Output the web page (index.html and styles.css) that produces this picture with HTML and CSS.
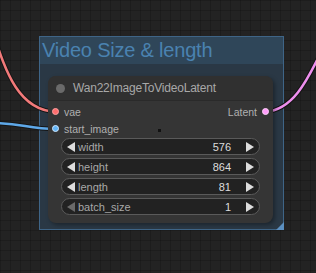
FILE: index.html
```html
<!DOCTYPE html>
<html lang="en">
<head>
  <meta charset="UTF-8">
  <title>Video Size &amp; length</title>
  <link rel="stylesheet" href="styles.css">
</head>
<body>
  <div class="canvas">
    <div class="group">
      <div class="group-title">Video Size &amp; length</div>
      <div class="group-resize"></div>
    </div>

    <svg class="links" width="316" height="273" viewBox="0 0 316 273">
      <g fill="none" stroke-linecap="round">
        <path class="link-shadow" d="M -8 30 C 6 72, 18 110, 56 112"/>
        <path d="M -8 30 C 6 72, 18 110, 56 112" stroke="#f27a7a"/>
        <path class="link-shadow" d="M -6 123 C 22 123, 28 129, 56 129"/>
        <path d="M -6 123 C 22 123, 28 129, 56 129" stroke="#5ea8e8"/>
        <path class="link-shadow" d="M 265 112 C 292 110, 306 84, 324 46"/>
        <path d="M 265 112 C 292 110, 306 84, 324 46" stroke="#ee8fee"/>
      </g>
    </svg>

    <div class="node">
      <div class="node-header">
        <span class="node-dot"></span>
        <span class="node-title">Wan22ImageToVideoLatent</span>
      </div>
      <div class="slots">
        <div class="slot-row">
          <div class="slot in"><span class="pin pin-vae"></span>vae</div>
          <div class="slot out">Latent<span class="pin pin-latent"></span></div>
        </div>
        <div class="slot-row">
          <div class="slot in"><span class="pin pin-image"></span>start_image</div>
        </div>
      </div>
      <div class="widgets">
        <div class="widget">
          <svg class="arrow" width="8" height="10" viewBox="0 0 8 10"><path d="M8 0 L0 5 L8 10 Z"/></svg>
          <span class="w-label">width</span>
          <span class="w-value">576</span>
          <svg class="arrow" width="8" height="10" viewBox="0 0 8 10"><path d="M0 0 L8 5 L0 10 Z"/></svg>
        </div>
        <div class="widget">
          <svg class="arrow" width="8" height="10" viewBox="0 0 8 10"><path d="M8 0 L0 5 L8 10 Z"/></svg>
          <span class="w-label">height</span>
          <span class="w-value">864</span>
          <svg class="arrow" width="8" height="10" viewBox="0 0 8 10"><path d="M0 0 L8 5 L0 10 Z"/></svg>
        </div>
        <div class="widget">
          <svg class="arrow" width="8" height="10" viewBox="0 0 8 10"><path d="M8 0 L0 5 L8 10 Z"/></svg>
          <span class="w-label">length</span>
          <span class="w-value">81</span>
          <svg class="arrow" width="8" height="10" viewBox="0 0 8 10"><path d="M0 0 L8 5 L0 10 Z"/></svg>
        </div>
        <div class="widget">
          <svg class="arrow arrow-off" width="8" height="10" viewBox="0 0 8 10"><path d="M8 0 L0 5 L8 10 Z"/></svg>
          <span class="w-label">batch_size</span>
          <span class="w-value">1</span>
          <svg class="arrow" width="8" height="10" viewBox="0 0 8 10"><path d="M0 0 L8 5 L0 10 Z"/></svg>
        </div>
      </div>
      <span class="cursor-dot"></span>
    </div>
  </div>
</body>
</html>
```

FILE: styles.css
```css
body {
  margin: 0;
  font-family: "Liberation Sans", Arial, sans-serif;
  background: #222;
}

.canvas {
  position: relative;
  width: 316px;
  height: 273px;
  overflow: hidden;
  background-color: #232323;
  background-image:
    linear-gradient(to right, rgba(0,0,0,0.18) 1px, transparent 1px),
    linear-gradient(to bottom, rgba(0,0,0,0.18) 1px, transparent 1px);
  background-size: 10px 10px;
}

.group {
  position: absolute;
  left: 39px;
  top: 36px;
  width: 243px;
  height: 192px;
  border: 1px solid #3f6587;
  background: #2a3845;
  z-index: 1;
}

.group-title {
  height: 27px;
  background: #2f4659;
  color: #4a82b0;
  font-size: 20px;
  line-height: 26px;
  padding-left: 2px;
  letter-spacing: -0.2px;
}

.group-resize {
  position: absolute;
  right: -1px;
  bottom: -1px;
  width: 0;
  height: 0;
  border-left: 8px solid transparent;
  border-bottom: 8px solid #5b8fc0;
}

.links {
  position: absolute;
  left: 0;
  top: 0;
  z-index: 2;
}

.links path {
  stroke-width: 2.5;
}

.links .link-shadow {
  stroke: #151515;
  stroke-width: 4.5;
}

.node {
  position: absolute;
  left: 48px;
  top: 76px;
  width: 225px;
  height: 147px;
  background: #353535;
  border-radius: 8px;
  box-shadow: 2px 2px 4px rgba(0,0,0,0.35);
  z-index: 3;
  display: flex;
  flex-direction: column;
}

.node-header {
  height: 24px;
  background: #303030;
  border-radius: 8px 8px 0 0;
  display: flex;
  align-items: center;
  border-bottom: 1px solid #2a2a2a;
}

.node-dot {
  width: 9px;
  height: 9px;
  border-radius: 50%;
  background: #6a6a6a;
  margin-left: 8px;
  margin-right: 8px;
}

.node-title {
  color: #a8a8a8;
  font-size: 12px;
  letter-spacing: -0.2px;
}

.slots {
  padding-top: 2px;
}

.slot-row {
  height: 17px;
  display: flex;
  align-items: center;
  justify-content: space-between;
}

.slot {
  display: flex;
  align-items: center;
  color: #b0b0b0;
  font-size: 10.5px;
}

.slot.in .pin {
  margin-left: 4px;
  margin-right: 5px;
}

.slot.out .pin {
  margin-left: 5px;
  margin-right: 4px;
}

.pin {
  width: 7px;
  height: 7px;
  border-radius: 50%;
  box-sizing: border-box;
}

.pin-vae {
  background: #ff6e6e;
  border: 1px solid #ffa0a0;
}

.pin-image {
  background: #64b5f6;
  border: 1px solid #cfe8ff;
}

.pin-latent {
  background: #ff9cf9;
  border: 1px solid #ffd0fc;
}

.widgets {
  display: flex;
  flex-direction: column;
  gap: 3px;
  padding: 1px 13px 0 13px;
}

.widget {
  height: 17px;
  box-sizing: border-box;
  border: 1px solid #5a5a5a;
  border-radius: 9px;
  background: #222;
  display: flex;
  align-items: center;
  padding: 0 5px;
  font-size: 11px;
}

.arrow {
  fill: #ddd;
  flex: none;
}

.arrow-off {
  fill: #6a6a6a;
}

.w-label {
  color: #a8a8a8;
  margin-left: 3px;
  flex: 1;
}

.w-value {
  color: #dddddd;
  margin-right: 15px;
}

.cursor-dot {
  position: absolute;
  left: 110px;
  top: 53px;
  width: 3px;
  height: 3px;
  background: #111;
}
```
